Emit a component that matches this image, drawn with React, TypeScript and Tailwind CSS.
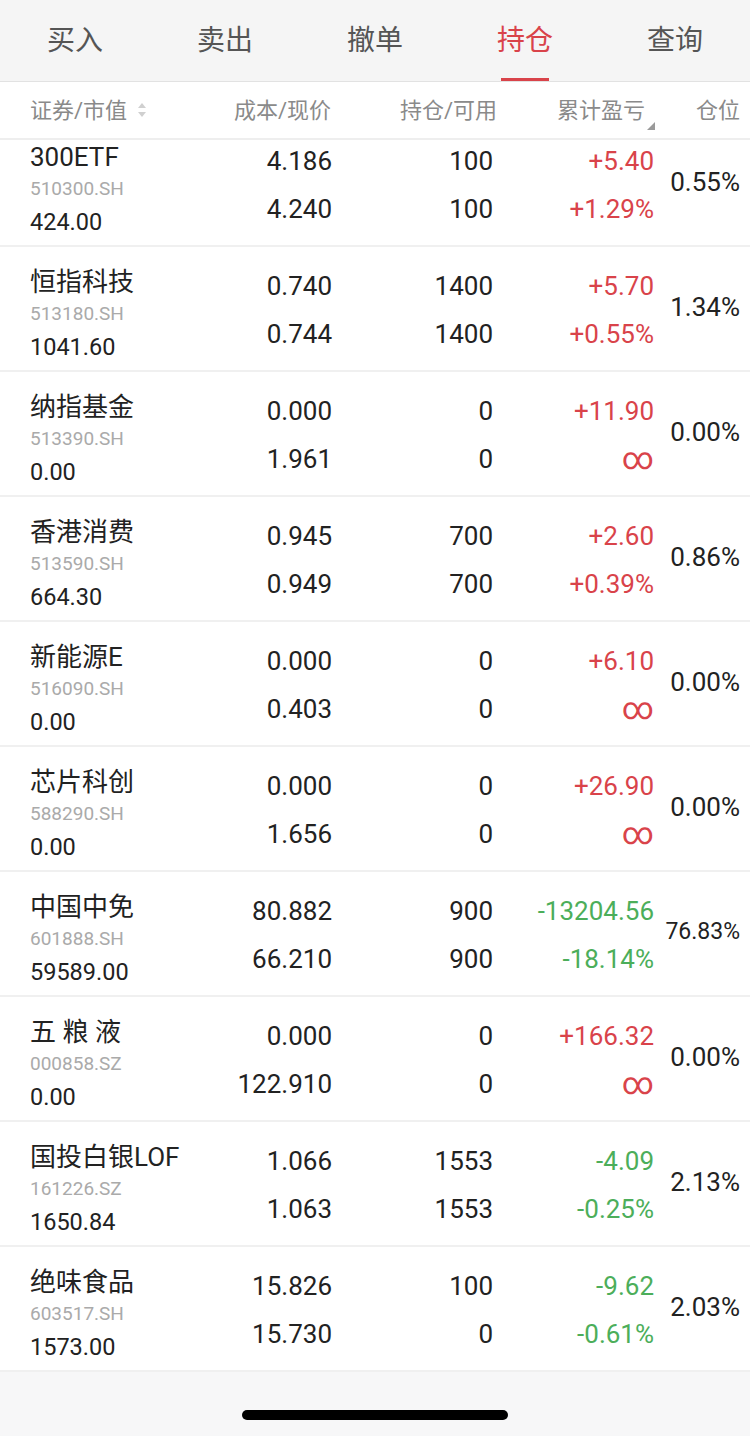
import React from "react";

const FONT = { fontFamily: "Roboto, 'Noto Sans CJK SC', sans-serif" };

type Row = {
  name: string;
  code: string;
  value: string;
  cost: string;
  price: string;
  hold: string;
  avail: string;
  pnl: string;
  pnlPct: string;
  ratio: string;
  small?: boolean;
};

const ROWS: Row[] = [
  { name: "300ETF", code: "510300.SH", value: "424.00", cost: "4.186", price: "4.240", hold: "100", avail: "100", pnl: "+5.40", pnlPct: "+1.29%", ratio: "0.55%" },
  { name: "恒指科技", code: "513180.SH", value: "1041.60", cost: "0.740", price: "0.744", hold: "1400", avail: "1400", pnl: "+5.70", pnlPct: "+0.55%", ratio: "1.34%" },
  { name: "纳指基金", code: "513390.SH", value: "0.00", cost: "0.000", price: "1.961", hold: "0", avail: "0", pnl: "+11.90", pnlPct: "∞", ratio: "0.00%" },
  { name: "香港消费", code: "513590.SH", value: "664.30", cost: "0.945", price: "0.949", hold: "700", avail: "700", pnl: "+2.60", pnlPct: "+0.39%", ratio: "0.86%" },
  { name: "新能源E", code: "516090.SH", value: "0.00", cost: "0.000", price: "0.403", hold: "0", avail: "0", pnl: "+6.10", pnlPct: "∞", ratio: "0.00%" },
  { name: "芯片科创", code: "588290.SH", value: "0.00", cost: "0.000", price: "1.656", hold: "0", avail: "0", pnl: "+26.90", pnlPct: "∞", ratio: "0.00%" },
  { name: "中国中免", code: "601888.SH", value: "59589.00", cost: "80.882", price: "66.210", hold: "900", avail: "900", pnl: "-13204.56", pnlPct: "-18.14%", ratio: "76.83%", small: true },
  { name: "五 粮 液", code: "000858.SZ", value: "0.00", cost: "0.000", price: "122.910", hold: "0", avail: "0", pnl: "+166.32", pnlPct: "∞", ratio: "0.00%" },
  { name: "国投白银LOF", code: "161226.SZ", value: "1650.84", cost: "1.066", price: "1.063", hold: "1553", avail: "1553", pnl: "-4.09", pnlPct: "-0.25%", ratio: "2.13%" },
  { name: "绝味食品", code: "603517.SH", value: "1573.00", cost: "15.826", price: "15.730", hold: "100", avail: "0", pnl: "-9.62", pnlPct: "-0.61%", ratio: "2.03%" },
];

const TABS = ["买入", "卖出", "撤单", "持仓", "查询"];

function SortIcon() {
  return (
    <svg width="10" height="16" viewBox="0 0 10 16" className="ml-[10px]">
      <path d="M5 1 L9 6 H1 Z" fill="#d0d0d0" />
      <path d="M5 15 L9 10 H1 Z" fill="#d0d0d0" />
    </svg>
  );
}

function CornerIcon() {
  return (
    <svg width="8" height="8" viewBox="0 0 8 8" className="self-end mb-[8px] ml-[2px]">
      <path d="M8 0 V8 H0 Z" fill="#9a9a9a" />
    </svg>
  );
}

function HoldingRow({ r }: { r: Row }) {
  const color = r.pnl.startsWith("-") ? "text-[#4cae5a]" : "text-[#d9434a]";
  return (
    <div className="flex h-[125px] border-b-2 border-[#f0f0f0] bg-white text-[#222]">
      <div className="w-[190px] pl-[30px] pt-[20px] flex flex-col">
        <div className="text-[26px] leading-[30px] whitespace-nowrap">{r.name}</div>
        <div className="text-[19px] leading-[34px] text-[#aaaaaa]">{r.code}</div>
        <div className="text-[23.5px] leading-[32px]">{r.value}</div>
      </div>
      <div className="w-[142px] pt-[15px] flex flex-col items-end text-[26px] leading-[48px]">
        <div>{r.cost}</div>
        <div>{r.price}</div>
      </div>
      <div className="w-[161px] pt-[15px] flex flex-col items-end text-[26px] leading-[48px]">
        <div>{r.hold}</div>
        <div>{r.avail}</div>
      </div>
      <div className={`w-[161px] pt-[15px] flex flex-col items-end text-[26px] leading-[48px] ${color}`}>
        <div>{r.pnl}</div>
        <div className={r.pnlPct === "∞" ? "text-[31px]" : ""}>{r.pnlPct}</div>
      </div>
      <div className={`w-[86px] flex items-center justify-end pb-[2px] ${r.small ? "text-[23px]" : "text-[26px]"}`}>
        {r.ratio}
      </div>
    </div>
  );
}

export default function App() {
  return (
    <div className="w-[750px] h-[1436px] bg-[#f7f7f8] flex flex-col overflow-hidden" style={FONT}>
      {/* Tabs */}
      <div className="h-[82px] bg-[#f5f5f5] border-b border-[#e2e2e2] grid grid-cols-5 shrink-0">
        {TABS.map((t) => {
          const active = t === "持仓";
          return (
            <div key={t} className="relative flex items-center justify-center">
              <span className={`text-[28px] ${active ? "text-[#d9434a]" : "text-[#555]"}`}>{t}</span>
              {active && (
                <div className="absolute bottom-0 left-1/2 -translate-x-1/2 w-[48px] h-[3px] bg-[#d9434a]" />
              )}
            </div>
          );
        })}
      </div>

      {/* Column header */}
      <div className="h-[58px] bg-white border-b-2 border-[#eeeeee] flex items-center text-[22px] text-[#8a8a8a] shrink-0">
        <div className="w-[190px] pl-[30px] flex items-center">
          证券/市值
          <SortIcon />
        </div>
        <div className="w-[142px] text-right pr-[1px]">成本/现价</div>
        <div className="w-[165px] text-right">持仓/可用</div>
        <div className="w-[158px] flex justify-end items-center h-full">
          累计盈亏
          <CornerIcon />
        </div>
        <div className="w-[85px] text-right">仓位</div>
      </div>

      {/* Holdings list */}
      <div className="h-[1232px] overflow-hidden shrink-0">
        <div className="-mt-[18px]">
          {ROWS.map((r) => (
            <HoldingRow key={r.code} r={r} />
          ))}
        </div>
      </div>

      {/* Home indicator */}
      <div className="flex-1 flex justify-center pt-[38px]">
        <div className="w-[266px] h-[10px] rounded-full bg-black" />
      </div>
    </div>
  );
}
